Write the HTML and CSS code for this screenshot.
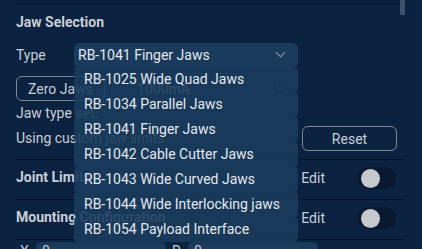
FILE: index.html
```html
<!DOCTYPE html>
<html>
  <head>
    <meta charset="UTF-8" />
    <title>Jaw Selection</title>
    <link rel="stylesheet" href="styles.css">
  </head>
  <body>
    <div class="scrollbar"></div>

    <div class="panel">
      <div class="section">
        <h3 class="title">Jaw Selection</h3>

        <div class="row">
          <span class="label">Type</span>
          <div class="select-wrap">
            <div class="select open">
              <span>RB-1041 Finger Jaws</span>
              <span class="chevron"></span>
            </div>

            <ul class="menu">
              <li>RB-1025 Wide Quad Jaws</li>
              <li>RB-1034 Parallel Jaws</li>
              <li>RB-1041 Finger Jaws</li>
              <li>RB-1042 Cable Cutter Jaws</li>
              <li>RB-1043 Wide Curved Jaws</li>
              <li>RB-1044 Wide Interlocking jaws</li>
              <li>RB-1054 Payload Interface</li>
            </ul>
          </div>
        </div>

        <div class="row">
          <button class="btn zero">Zero Jaws</button>
          <div class="select current">
            <span>1000mA</span>
            <span class="chevron"></span>
          </div>
        </div>

        <div class="status">Jaw type set.</div>

        <div class="row spread">
          <span class="status">Using custom jaw limits</span>
          <button class="btn reset">Reset</button>
        </div>
      </div>

      <div class="section toggle-row">
        <h3 class="title">Joint Limits</h3>
        <span class="edit">Edit</span>
        <span class="switch"><span class="knob"></span></span>
      </div>

      <div class="section toggle-row">
        <h3 class="title">Mounting Configuration</h3>
        <span class="edit">Edit</span>
        <span class="switch"><span class="knob"></span></span>
      </div>

      <div class="coords">
        <span class="label">X</span>
        <span class="field">0</span>
        <span class="label">R</span>
        <span class="field">0</span>
      </div>
    </div>
  </body>
</html>
```

FILE: styles.css
```css
body {
  margin: 0;
  width: 422px;
  height: 249px;
  overflow: hidden;
  background-color: #0c2241;
  font-family: Roboto, "Liberation Sans", sans-serif;
  font-size: 14px;
  color: #c9ced6;
  position: relative;
}

.scrollbar {
  position: absolute;
  top: 0;
  left: 400px;
  width: 5px;
  height: 15px;
  background-color: #3d516b;
}

.panel {
  margin-left: 16px;
  width: 389px;
  height: 246px;
  padding-top: 3px;
  overflow: hidden;
}

.section {
  border-top: 1px solid #06142a;
}

.title {
  margin: 0;
  font-size: 14px;
  font-weight: bold;
  color: #c9ced6;
}

.section > .title {
  padding: 10px 0 12px;
  line-height: 17px;
}

.row {
  display: flex;
  align-items: center;
}

.label {
  width: 58px;
}

.select-wrap {
  position: relative;
}

.select {
  display: flex;
  align-items: center;
  justify-content: space-between;
  box-sizing: border-box;
  height: 24px;
  padding: 0 14px 0 4px;
  border-radius: 5px;
  background-color: #1a3b5c;
  color: #e4e8ee;
}

.select.open {
  width: 224px;
}

.chevron {
  width: 6px;
  height: 6px;
  border-right: 1.5px solid #8a9ab0;
  border-bottom: 1.5px solid #8a9ab0;
  transform: translateY(-3px) rotate(45deg);
}

.menu {
  position: absolute;
  top: 24px;
  left: 0;
  z-index: 10;
  margin: 0;
  padding: 0;
  list-style: none;
}

.menu li {
  box-sizing: border-box;
  width: 224px;
  height: 25px;
  line-height: 25px;
  padding-left: 10px;
  border-radius: 4px;
  background-color: rgba(27, 60, 93, 0.9);
  color: #e4e8ee;
}

.btn {
  box-sizing: border-box;
  height: 25px;
  border: 1px solid #7d8898;
  border-radius: 6px;
  background: transparent;
  color: #c9ced6;
  font-family: inherit;
  font-size: 14px;
}

.zero {
  width: 89px;
  margin-top: 9px;
}

.select.current {
  width: 168px;
  height: 25px;
  margin: 9px 0 0 25px;
  padding-left: 7px;
  background-color: #0e2646;
}

.status {
  line-height: 25px;
}

.spread {
  justify-content: space-between;
  padding-bottom: 8px;
}

.reset {
  width: 95px;
  margin-right: 8px;
}

.toggle-row {
  display: flex;
  align-items: center;
  box-sizing: border-box;
  height: 40px;
  padding-bottom: 3px;
}

.toggle-row .title {
  flex: 1;
}

.edit {
  margin-right: 33px;
}

.switch {
  display: flex;
  align-items: center;
  box-sizing: border-box;
  width: 38px;
  height: 22px;
  margin-right: 9px;
  padding-left: 3px;
  border-radius: 11px;
  background-color: #091a30;
}

.knob {
  width: 19px;
  height: 19px;
  border-radius: 50%;
  background-color: #c8c9ce;
}

.coords {
  display: flex;
  align-items: flex-start;
  padding-top: 2px;
  border-top: 1px solid #06142a;
  line-height: 18px;
}

.coords .label {
  width: 16px;
  padding-left: 4px;
}

.coords .label + .field + .label {
  padding-left: 6px;
}

.field {
  width: 118px;
  padding: 0 6px;
  border-radius: 5px;
  background-color: #1a3b5c;
}
```
